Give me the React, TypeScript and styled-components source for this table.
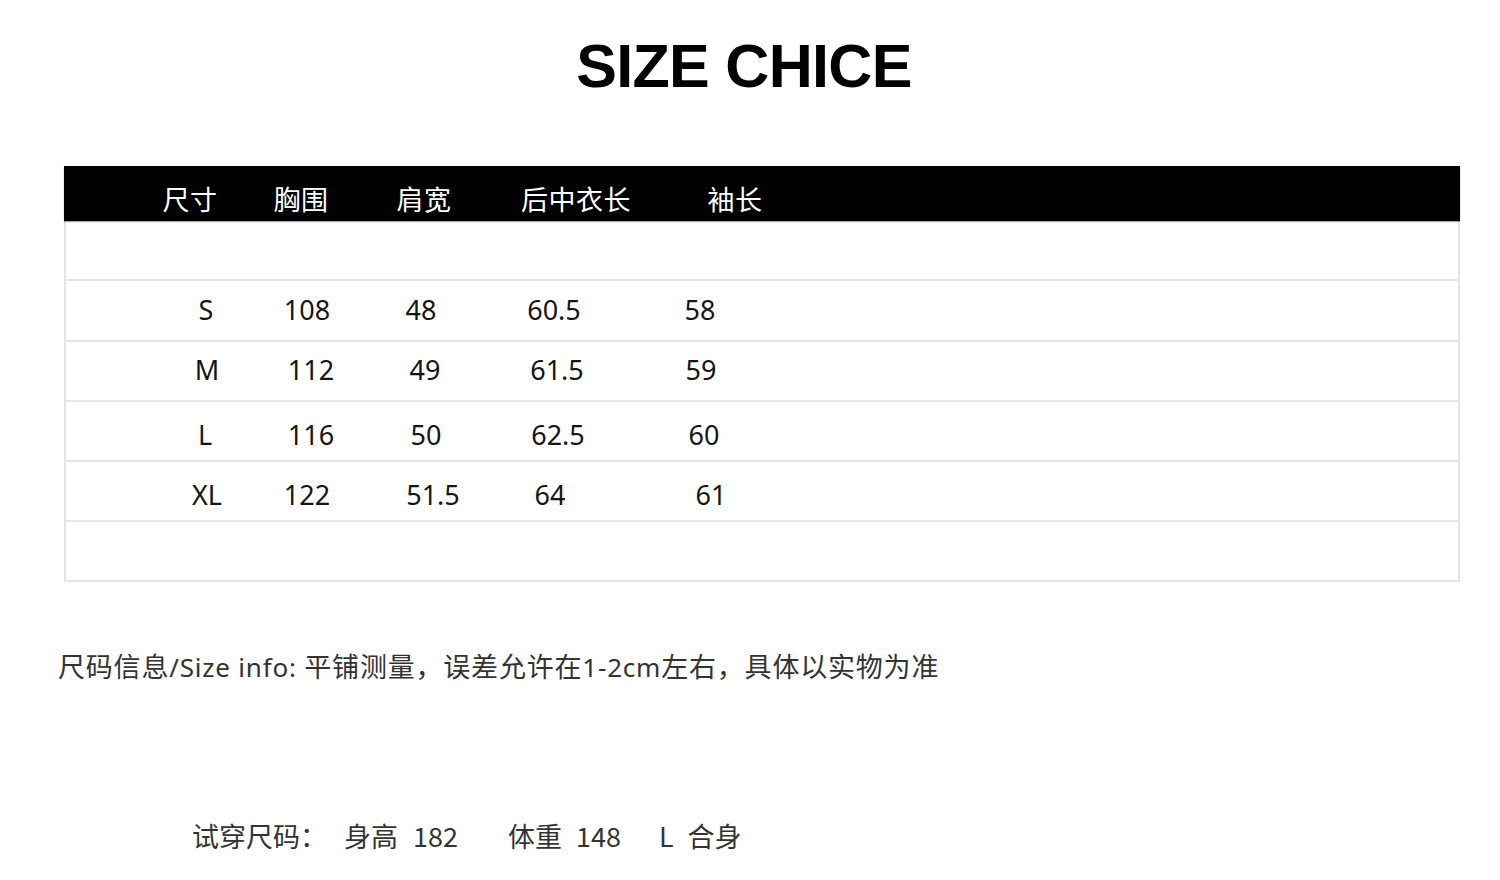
import React from "react";
import styled, { createGlobalStyle } from "styled-components";

const Global = createGlobalStyle`
  html, body { margin: 0; padding: 0; background: #fff; }
  body { font-family: "Noto Sans CJK SC", "Noto Sans", sans-serif; }
`;

const Page = styled.div`
  width: 1500px;
  height: 880px;
  display: flex;
  flex-direction: column;
  background: #fff;
  overflow: hidden;
`;

const Title = styled.h1`
  margin: 31px 0 0 0;
  padding-right: 12px;
  text-align: center;
  font-family: "Liberation Sans", Arial, sans-serif;
  font-weight: 700;
  font-size: 61px;
  line-height: 70px;
  letter-spacing: -0.7px;
  color: #000;
`;

const Table = styled.div`
  margin: 65px 0 0 64px;
  width: 1396px;
  display: flex;
  flex-direction: column;
  border-left: 2px solid #e4e4e4;
  border-right: 2px solid #e4e4e4;
  box-sizing: border-box;
`;

const HeaderRow = styled.div`
  height: 55px;
  margin: 0 -2px;
  background: #000;
  box-shadow: 0 1px 1px rgba(0, 0, 0, 0.35);
  display: grid;
  grid-template-columns: 120px 102px 144px 160px 158px;
  padding-left: 66px;
  align-items: center;
  padding-top: 11px;
  box-sizing: border-box;
`;

const HeadCell = styled.div`
  text-align: center;
  color: #fff;
  font-family: "Noto Sans CJK SC", sans-serif;
  font-size: 27px;
  line-height: 34px;
  letter-spacing: 0.5px;
`;

const Row = styled.div<{ $dy: number; $h: number }>`
  height: ${(p) => p.$h}px;
  border-bottom: 2px solid #e6e6e6;
  display: grid;
  grid-template-columns: 112px 94px 140px 118px 180px;
  padding-left: 84px;
  align-items: center;
  box-sizing: border-box;
  padding-top: ${(p) => Math.max(p.$dy, 0) * 2}px;
  padding-bottom: ${(p) => Math.max(-p.$dy, 0) * 2}px;
`;

const Cell = styled.div<{ $dx: number }>`
  text-align: center;
  font-family: "Noto Sans", sans-serif;
  font-size: 27px;
  line-height: 34px;
  color: #151515;
  transform: translateX(${(p) => p.$dx}px);
`;

const Info = styled.div`
  margin: 64px 0 0 58px;
  font-family: "Noto Sans CJK SC", sans-serif;
  font-size: 27px;
  letter-spacing: 0.8px;
  line-height: 40px;
  color: #333;
  white-space: nowrap;
`;

const Latin = styled.span`
  font-family: "Noto Sans", sans-serif;
  font-size: 26px;
`;

const Fit = styled.div`
  margin: 129px 0 0 192px;
  display: flex;
  align-items: center;
  font-family: "Noto Sans CJK SC", sans-serif;
  font-size: 27px;
  line-height: 40px;
  color: #333;
  white-space: nowrap;
`;

const FitPart = styled.span<{ $ml: number }>`
  margin-left: ${(p) => p.$ml}px;
`;

const headers = ["尺寸", "胸围", "肩宽", "后中衣长", "袖长"];

const rows: { dy: number; h: number; cells: [string, number][] }[] = [
  { dy: 0, h: 60, cells: [] },
  { dy: -1, h: 61, cells: [["S", 0], ["108", -2], ["48", -5], ["60.5", -1], ["58", -4]] },
  { dy: -1, h: 60, cells: [["M", 1], ["112", 2], ["49", -1], ["61.5", 2], ["59", -3]] },
  { dy: 4, h: 60, cells: [["L", -1], ["116", 2], ["50", 0], ["62.5", 3], ["60", 0]] },
  { dy: 4, h: 60, cells: [["XL", 1], ["122", -2], ["51.5", 7], ["64", -5], ["61", 7]] },
  { dy: 0, h: 60, cells: [] },
];

const fit: [string, number][] = [
  ["试穿尺码：", 0],
  ["身高", 17],
  ["182", 15],
  ["体重", 50],
  ["148", 14],
  ["L", 38],
  ["合身", 14],
];

export default function App() {
  return (
    <Page>
      <Global />
      <Title>SIZE CHICE</Title>
      <Table>
        <HeaderRow>
          {headers.map((h) => (
            <HeadCell key={h}>{h}</HeadCell>
          ))}
        </HeaderRow>
        {rows.map((r, i) => (
          <Row key={i} $dy={r.dy} $h={r.h}>
            {r.cells.map(([t, dx], j) => (
              <Cell key={j} $dx={dx}>
                {t}
              </Cell>
            ))}
          </Row>
        ))}
      </Table>
      <Info>
        尺码信息<Latin>/Size info: </Latin>平铺测量，误差允许在<Latin>1-2cm</Latin>左右，具体以实物为准
      </Info>
      <Fit>
        {fit.map(([t, ml], i) => (
          <FitPart key={i} $ml={ml}>
            {t}
          </FitPart>
        ))}
      </Fit>
    </Page>
  );
}
